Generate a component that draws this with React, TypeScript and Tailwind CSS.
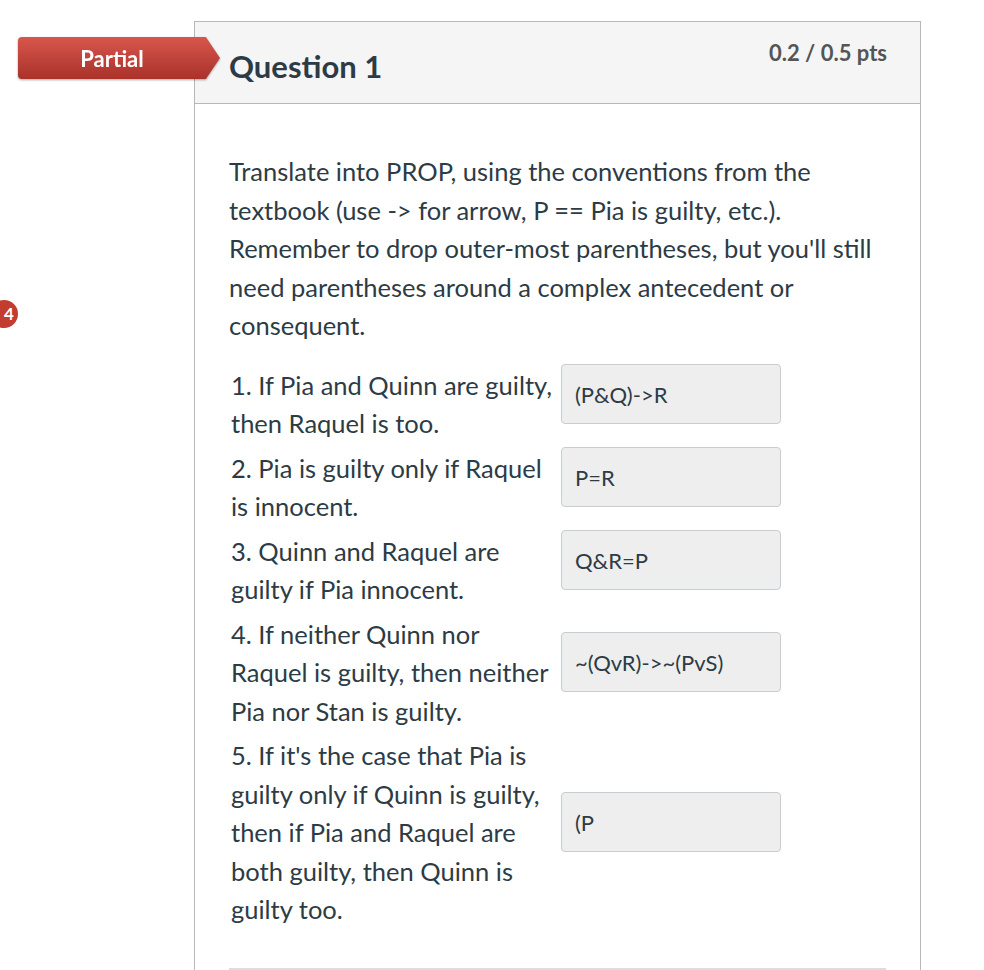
import React from "react";

interface Item {
  n: number;
  text: string;
  answer: string;
}

const ITEMS: Item[] = [
  { n: 1, text: "If Pia and Quinn are guilty, then Raquel is too.", answer: "(P&Q)->R" },
  { n: 2, text: "Pia is guilty only if Raquel is innocent.", answer: "P=R" },
  { n: 3, text: "Quinn and Raquel are guilty if Pia innocent.", answer: "Q&R=P" },
  { n: 4, text: "If neither Quinn nor Raquel is guilty, then neither Pia nor Stan is guilty.", answer: "~(QvR)->~(PvS)" },
  {
    n: 5,
    text: "If it's the case that Pia is guilty only if Quinn is guilty, then if Pia and Raquel are both guilty, then Quinn is guilty too.",
    answer: "(P",
  },
];

export default function App() {
  return (
    <div className="relative min-h-[970px] overflow-hidden bg-white pt-[21px] font-['Lato','Open_Sans',sans-serif] text-[#2d3b45]">
      {/* question number bubble, cut off by the window edge */}
      <div className="absolute left-[-10px] top-[300px] flex h-[28px] w-[28px] items-center justify-center rounded-full bg-[#c23c30] text-[17px] font-bold text-white">
        <span className="pl-[10px]">4</span>
      </div>

      <div className="relative ml-[194px] w-[727px] border-x border-t border-[#b8b8b8]">
        {/* Partial ribbon */}
        <div className="absolute left-[-177px] top-[15px] z-10 h-[42px] w-[202px] drop-shadow-[0_1px_1px_rgba(0,0,0,0.35)]">
          <div className="flex h-full w-full items-center rounded-l-[4px] bg-gradient-to-b from-[#d8564c] to-[#a9322a] pr-[14px] [clip-path:polygon(0_0,93%_0,100%_50%,93%_100%,0_100%)]">
            <span className="w-[188px] text-center text-[22px] font-bold text-white">Partial</span>
          </div>
        </div>

        <div className="flex h-[82px] items-start justify-between border-b border-[#b8b8b8] bg-[#f5f5f5] pl-[34px] pr-[33px]">
          <h2 className="pt-[25px] text-[31px] font-bold leading-[38px]">Question 1</h2>
          <span className="pt-[17px] text-[22px] font-bold leading-[28px] text-[#555]">0.2 / 0.5 pts</span>
        </div>

        <div className="px-[34px] pt-[48px]">
          <p className="text-[25.5px] leading-[38.5px]">
            Translate into PROP, using the conventions from the textbook (use -&gt; for arrow, P == Pia is guilty, etc.).
            Remember to drop outer-most parentheses, but you'll still need parentheses around a complex antecedent or
            consequent.
          </p>

          <div className="mt-[18px] flex flex-col">
            {ITEMS.map((item) => (
              <div key={item.n} className="flex items-center py-[3px]">
                <div className="w-[332px] pl-[2px] text-[25.5px] leading-[38.5px]">{`${item.n}. ${item.text}`}</div>
                <div className="-mt-[2px] mb-[18px]">
                  <div className="flex h-[60px] w-[220px] items-center rounded-[4px] border border-[#c7cdd1] bg-[#eeeeee] px-[13px] text-[22px] text-[#2d3b45]">
                    {item.answer}
                  </div>
                </div>
              </div>
            ))}
          </div>

          <div className="mt-[36px] border-t-2 border-[#dddddd]" />
          <div className="h-[60px]" />
        </div>
      </div>
    </div>
  );
}
